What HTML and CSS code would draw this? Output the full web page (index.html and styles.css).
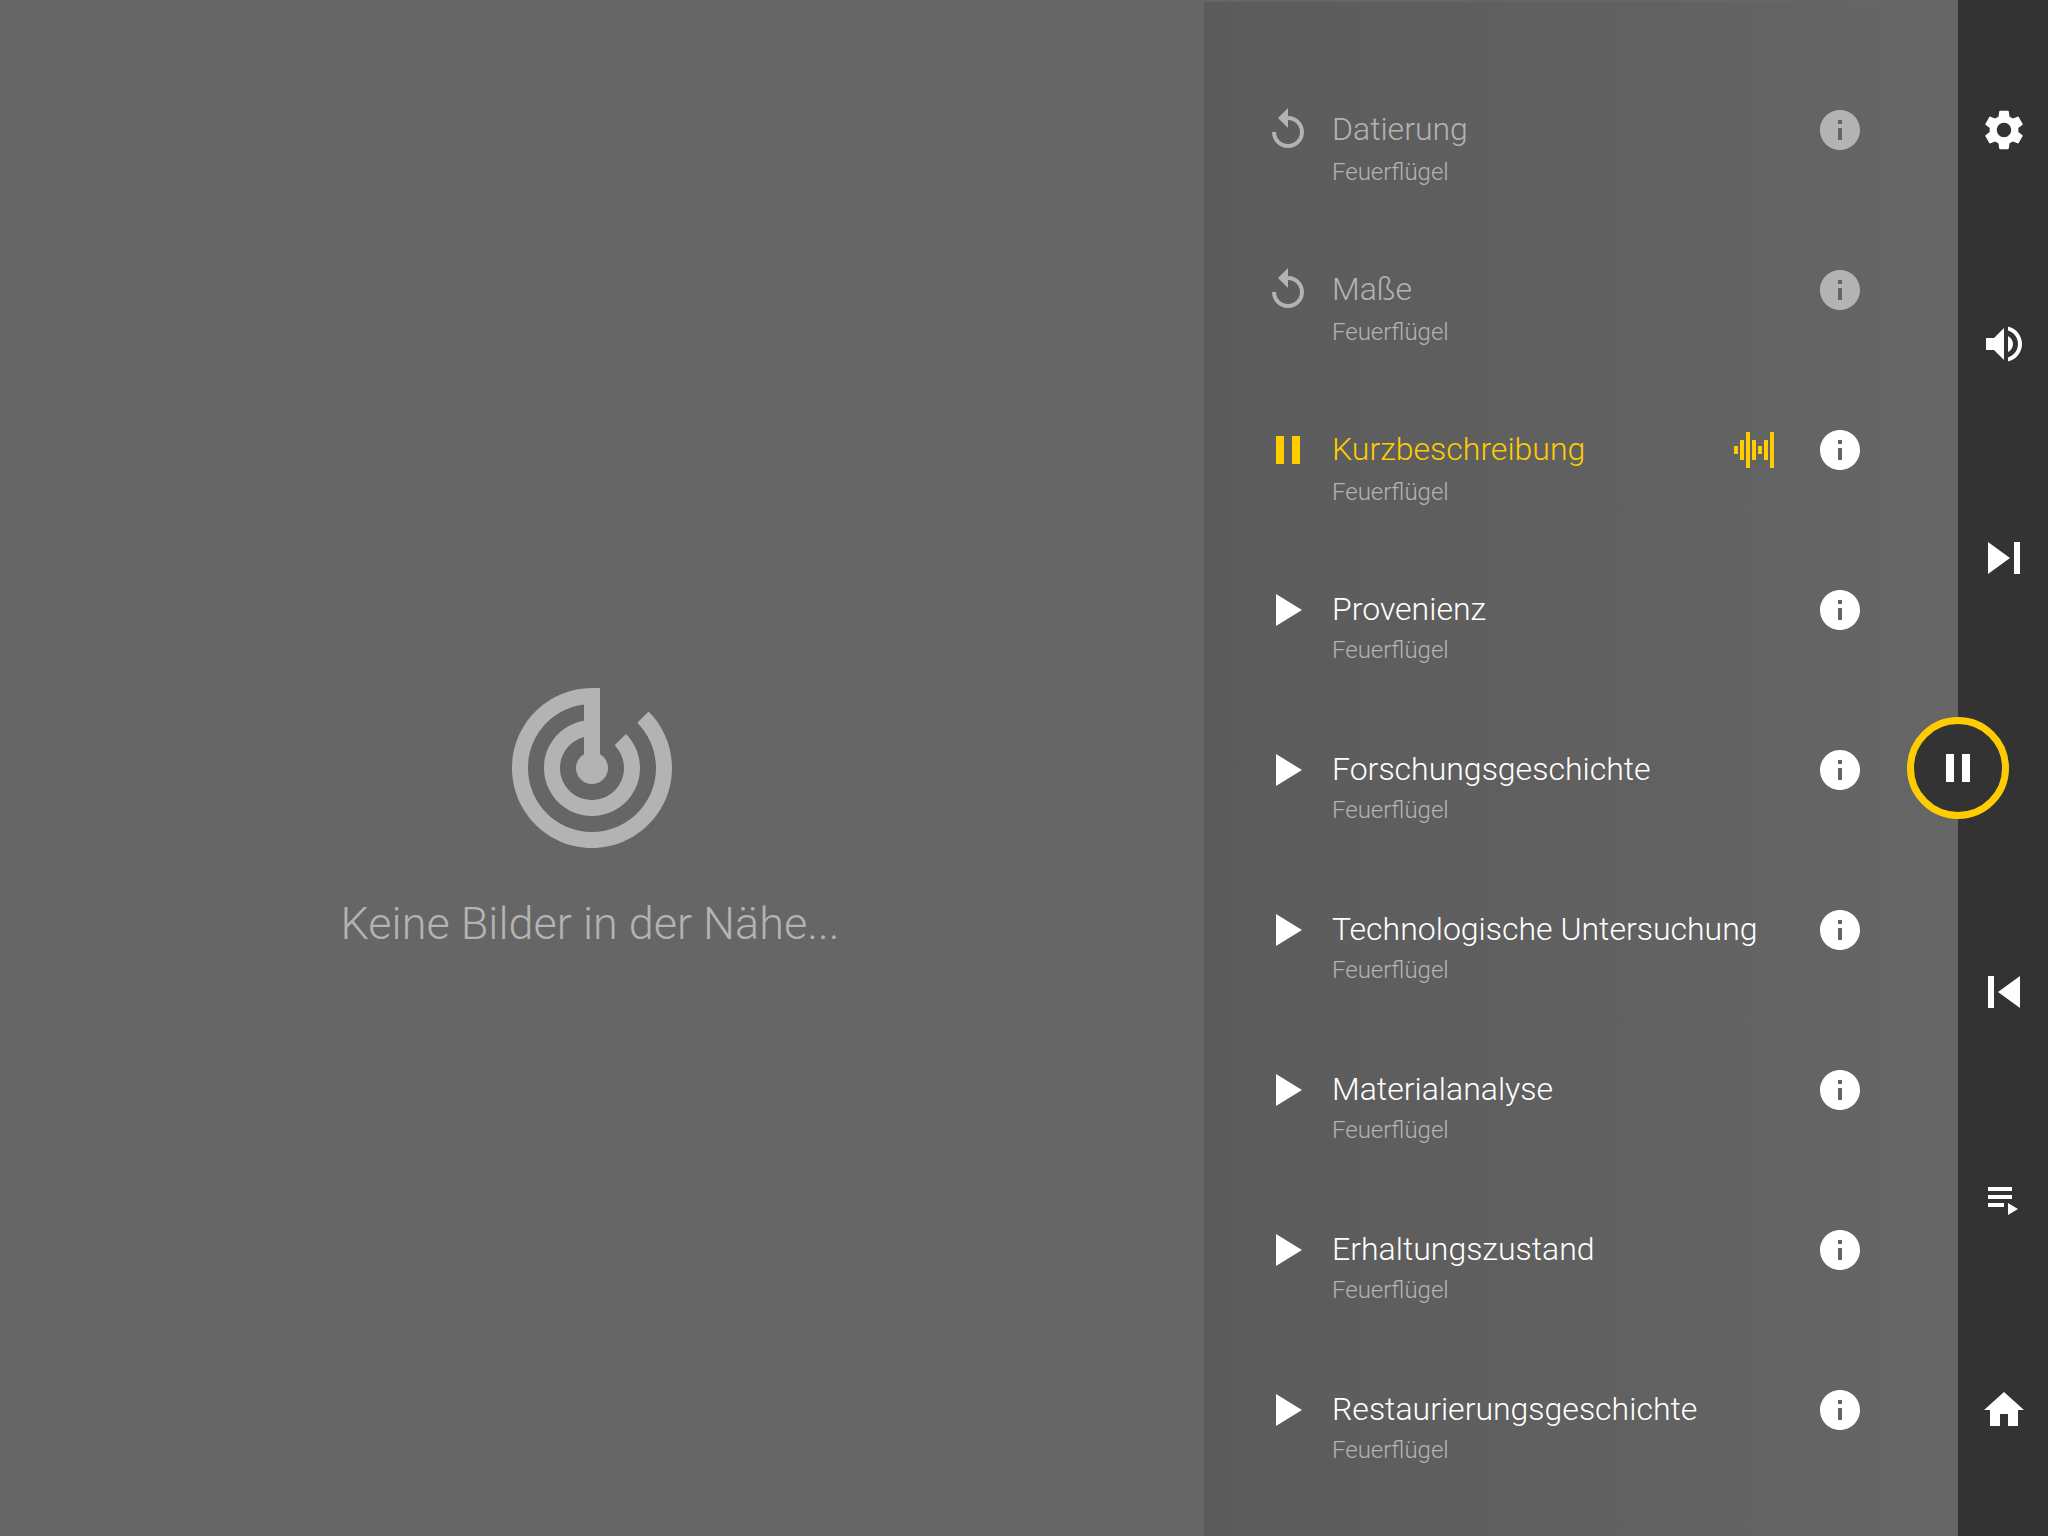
FILE: index.html
```
<!DOCTYPE html>
<html lang="de">
<head>
<meta charset="utf-8">
<meta name="viewport" content="width=device-width, initial-scale=1">
<title>Feuerflügel</title>
<link rel="stylesheet" href="styles.css">
</head>
<body>
<svg class="sprite" aria-hidden="true">
  <symbol id="replay" viewBox="0 0 24 24"><path d="M12 5V1L7 6l5 5V7c3.31 0 6 2.69 6 6s-2.69 6-6 6-6-2.69-6-6H4c0 4.42 3.58 8 8 8s8-3.58 8-8-3.58-8-8-8z"/></symbol>
  <symbol id="pause" viewBox="0 0 24 24"><path d="M6 19h4V5H6v14zm8-14v14h4V5h-4z"/></symbol>
  <symbol id="play" viewBox="0 0 24 24"><path d="M6 4v16l13-8z"/></symbol>
  <symbol id="info" viewBox="0 0 24 24"><path d="M12 2C6.48 2 2 6.48 2 12s4.48 10 10 10 10-4.480 10-10S17.520 2 12 2zm1 15h-2v-6h2v6zm0-8h-2V7h2v2z"/></symbol>
  <symbol id="wave" viewBox="0 0 48 48"><path d="M4 20h4v8H4zM10 14h4v20h-4zM16 6h4v36h-4zM22 14h4v20h-4zM28 20h4v8h-4zM34 14h4v20h-4zM40 6h4v36h-4z"/></symbol>
</svg>
<div class="app">
  <main class="stage">
    <svg class="radar" viewBox="0 0 24 24" aria-hidden="true"><path d="M19.070 4.930l-1.410 1.410C19.100 7.790 20 9.790 20 12c0 4.420-3.580 8-8 8s-8-3.580-8-8c0-4.080 3.050-7.440 7-7.930v2.020C8.160 6.570 6 9.030 6 12c0 3.310 2.690 6 6 6s6-2.690 6-6c0-1.660-.670-3.160-1.760-4.240l-1.410 1.410C15.550 9.900 16 10.900 16 12c0 2.210-1.790 4-4 4s-4-1.790-4-4c0-1.860 1.280-3.410 3-3.860v2.140c-.6.350-1 .980-1 1.720 0 1.100.9 2 2 2s2-.9 2-2c0-.740-.4-1.380-1-1.720V2h-1C6.480 2 2 6.480 2 12s4.480 10 10 10 10-4.480 10-10c0-2.760-1.120-5.260-2.930-7.070z"/></svg>
    <p class="notice">Keine Bilder in der Nähe...</p>
  </main>

  <section class="panel" aria-label="Beiträge">
    <ul class="tracks">
      <li class="track played">
        <button class="icon-button" aria-label="Wiederholen"><svg class="icon"><use href="#replay"/></svg></button>
        <div class="text"><h2>Datierung</h2><p>Feuerflügel</p></div>
        <button class="icon-button" aria-label="Info"><svg class="icon"><use href="#info"/></svg></button>
      </li>
      <li class="track played">
        <button class="icon-button" aria-label="Wiederholen"><svg class="icon"><use href="#replay"/></svg></button>
        <div class="text"><h2>Maße</h2><p>Feuerflügel</p></div>
        <button class="icon-button" aria-label="Info"><svg class="icon"><use href="#info"/></svg></button>
      </li>
      <li class="track current">
        <button class="icon-button toggle" aria-label="Pause"><svg class="icon"><use href="#pause"/></svg></button>
        <div class="text"><h2>Kurzbeschreibung</h2><p>Feuerflügel</p></div>
        <svg class="icon wave" aria-hidden="true"><use href="#wave"/></svg>
        <button class="icon-button" aria-label="Info"><svg class="icon"><use href="#info"/></svg></button>
      </li>
      <li class="track">
        <button class="icon-button" aria-label="Abspielen"><svg class="icon"><use href="#play"/></svg></button>
        <div class="text"><h2>Provenienz</h2><p>Feuerflügel</p></div>
        <button class="icon-button" aria-label="Info"><svg class="icon"><use href="#info"/></svg></button>
      </li>
      <li class="track">
        <button class="icon-button" aria-label="Abspielen"><svg class="icon"><use href="#play"/></svg></button>
        <div class="text"><h2>Forschungsgeschichte</h2><p>Feuerflügel</p></div>
        <button class="icon-button" aria-label="Info"><svg class="icon"><use href="#info"/></svg></button>
      </li>
      <li class="track">
        <button class="icon-button" aria-label="Abspielen"><svg class="icon"><use href="#play"/></svg></button>
        <div class="text"><h2>Technologische Untersuchung</h2><p>Feuerflügel</p></div>
        <button class="icon-button" aria-label="Info"><svg class="icon"><use href="#info"/></svg></button>
      </li>
      <li class="track">
        <button class="icon-button" aria-label="Abspielen"><svg class="icon"><use href="#play"/></svg></button>
        <div class="text"><h2>Materialanalyse</h2><p>Feuerflügel</p></div>
        <button class="icon-button" aria-label="Info"><svg class="icon"><use href="#info"/></svg></button>
      </li>
      <li class="track">
        <button class="icon-button" aria-label="Abspielen"><svg class="icon"><use href="#play"/></svg></button>
        <div class="text"><h2>Erhaltungszustand</h2><p>Feuerflügel</p></div>
        <button class="icon-button" aria-label="Info"><svg class="icon"><use href="#info"/></svg></button>
      </li>
      <li class="track">
        <button class="icon-button" aria-label="Abspielen"><svg class="icon"><use href="#play"/></svg></button>
        <div class="text"><h2>Restaurierungsgeschichte</h2><p>Feuerflügel</p></div>
        <button class="icon-button" aria-label="Info"><svg class="icon"><use href="#info"/></svg></button>
      </li>
    </ul>
  </section>

  <nav class="rail" aria-label="Steuerung">
    <div class="rail-group upper">
      <button class="icon-button" aria-label="Einstellungen"><svg class="icon" viewBox="0 0 24 24"><path d="M19.140 12.940c.040-.3.060-.610.060-.940 0-.320-.020-.640-.070-.940l2.030-1.580c.180-.140.230-.410.120-.610l-1.920-3.320c-.120-.220-.370-.290-.590-.220l-2.390.960c-.5-.380-1.030-.7-1.620-.940l-.360-2.540c-.040-.240-.240-.410-.480-.410h-3.840c-.240 0-.430.170-.470.410l-.360 2.540c-.590.240-1.130.570-1.620.940l-2.390-.960c-.220-.080-.470 0-.590.220L2.740 8.870c-.120.210-.080.470.120.610l2.030 1.580c-.050.3-.090.630-.090.940s.020.640.070.940l-2.030 1.580c-.180.140-.230.410-.120.610l1.920 3.320c.120.220.370.290.590.220l2.390-.960c.5.380 1.030.7 1.620.940l.360 2.540c.050.240.240.410.480.410h3.840c.240 0 .440-.170.470-.410l.360-2.540c.590-.240 1.130-.560 1.620-.940l2.390.960c.220.080.470 0 .590-.220l1.920-3.320c.120-.220.070-.470-.120-.610l-2.010-1.580zM12 15.600c-1.980 0-3.600-1.620-3.600-3.600s1.620-3.600 3.600-3.600 3.600 1.620 3.600 3.600-1.620 3.600-3.600 3.600z"/></svg></button>
      <button class="icon-button" aria-label="Lautstärke"><svg class="icon" viewBox="0 0 24 24"><path d="M3 9v6h4l5 5V4L7 9H3zm13.500 3c0-1.770-1.020-3.290-2.500-4.030v8.050c1.480-.730 2.500-2.250 2.500-4.020zM14 3.230v2.060c2.890.860 5 3.540 5 6.710s-2.110 5.850-5 6.710v2.060c4.010-.910 7-4.490 7-8.770s-2.990-7.860-7-8.770z"/></svg></button>
      <button class="icon-button" aria-label="Weiter"><svg class="icon" viewBox="0 0 48 48"><path d="M8 8v32l22-16zM34 8h6v32h-6z"/></svg></button>
    </div>
    <div class="rail-group lower">
      <button class="icon-button" aria-label="Zurück"><svg class="icon" viewBox="0 0 48 48"><path d="M8 8h6v32H8zM40 8v32L18 24z"/></svg></button>
      <button class="icon-button" aria-label="Wiedergabeliste"><svg class="icon" viewBox="0 0 48 48"><path d="M8 10h24v4H8zM8 18h24v4H8zM8 26h16v4H8zM28 26v12l10-6z"/></svg></button>
      <a class="icon-button" href="#" aria-label="Startseite"><svg class="icon" viewBox="0 0 24 24"><path d="M10 20v-6h4v6h5v-8h3L12 3 2 12h3v8z"/></svg></a>
    </div>
    <button class="main-toggle" aria-label="Pause"><svg class="icon"><use href="#pause"/></svg></button>
  </nav>
</div>
</body>
</html>
```
FILE: styles.css
```
* {
  box-sizing: border-box;
}

body {
  margin: 0;
  background: #666;
  color: #fff;
  font-family: Roboto, "Liberation Sans", sans-serif;
  font-weight: 300;
}

h2,
p,
ul {
  margin: 0;
  padding: 0;
}

.sprite {
  position: absolute;
  width: 0;
  height: 0;
}

.app {
  display: grid;
  grid-template-columns: 602fr 377fr 90px;
  min-height: 100vh;
}

.icon {
  display: block;
  width: 48px;
  height: 48px;
  fill: currentColor;
}

.icon-button {
  display: block;
  flex: none;
  padding: 0;
  border: 0;
  background: none;
  color: inherit;
  cursor: pointer;
}

/* Image area */
.stage {
  display: flex;
  flex-direction: column;
  align-items: center;
  justify-content: center;
  padding: 90px 24px 0 0;
  color: #b3b3b3;
}

.radar {
  width: 192px;
  height: 192px;
  margin-left: 4px;
  fill: currentColor;
}

.notice {
  margin-top: 30px;
  font-size: 45px;
  line-height: 60px;
}

/* Track list */
.panel {
  margin-top: 2px;
  padding: 104px 94px 0 60px;
  background: linear-gradient(to right, #5b5b5b, #666);
}

.tracks {
  list-style: none;
}

.track {
  display: flex;
  align-items: flex-start;
  height: 160px;
}

.track:last-child {
  height: auto;
}

.text {
  flex: 1;
  padding-left: 20px;
  white-space: nowrap;
}

.text h2 {
  font-size: 32px;
  font-weight: 300;
  line-height: 46px;
}

.text p {
  margin-top: 4px;
  color: #b3b3b3;
  font-size: 24px;
  line-height: 28px;
}

.played {
  color: #b3b3b3;
}

.played p,
.current p {
  margin-top: 6px;
}

.current h2,
.current .toggle,
.wave {
  color: #fc0;
}

.wave {
  margin-right: 38px;
}

/* Control rail */
.rail {
  position: relative;
  display: grid;
  grid-template-rows: 1fr 1fr;
  background: #333;
}

.rail-group {
  display: flex;
  flex-direction: column;
  align-items: center;
  justify-content: space-between;
}

.upper {
  padding: 106px 0 186px 2px;
}

.lower {
  padding: 200px 0 102px 2px;
}

.main-toggle {
  position: absolute;
  top: 50%;
  left: 0;
  display: flex;
  align-items: center;
  justify-content: center;
  width: 102px;
  height: 102px;
  padding: 0;
  border: 7px solid #fc0;
  border-radius: 50%;
  background: #333;
  color: #fff;
  transform: translate(-50%, -50%);
  cursor: pointer;
}
```
